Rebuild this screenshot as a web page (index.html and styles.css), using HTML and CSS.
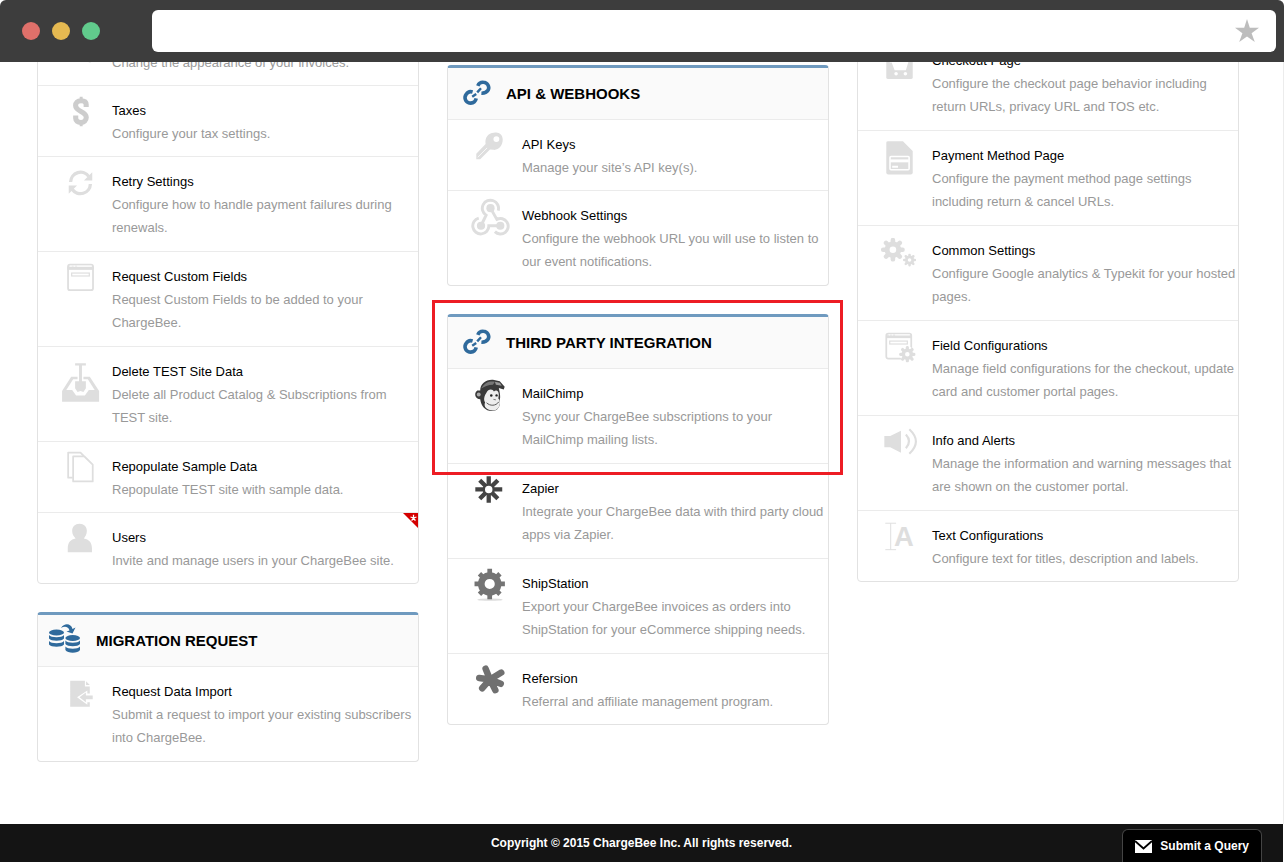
FILE: index.html
```html
<!DOCTYPE html>
<html lang="en">
<head>
<meta charset="utf-8">
<title>ChargeBee Settings</title>
<link rel="stylesheet" href="styles.css">
</head>
<body>
<svg class="defs" aria-hidden="true">
  <symbol id="gear" viewBox="-12 -12 24 24">
    <circle r="5.800" fill="none" stroke="currentColor" stroke-width="5"/>
    <g stroke="currentColor" stroke-width="4.600" stroke-linecap="round">
      <path d="M0-9.700V-7M0 9.700V7M-9.700 0H-7M9.700 0H7"/>
      <path d="M0-9.700V-7M0 9.700V7M-9.700 0H-7M9.700 0H7" transform="rotate(45)"/>
    </g>
  </symbol>
  <symbol id="link" viewBox="0 0 38 37">
    <g fill="none" stroke="#2f6a9c" stroke-width="3.600">
      <path d="M19.800 10.800A5.600 5.600 0 0 1 25.400 7.300A5.400 5.400 0 0 1 30.200 15Q28 18.400 23.400 18.200"/>
      <path d="M14.600 17A5.600 5.600 0 0 0 8.200 19.400A5.400 5.400 0 0 0 11.200 28Q17 28.800 18.200 23.400"/>
      <path d="M14.200 21.800L18.200 19M19.200 17.400L23 13.200" stroke-width="2.400"/>
    </g>
  </symbol>
</svg>
<div class="browser">
  <header class="chrome">
    <div class="dots"><span class="dot red"></span><span class="dot amber"></span><span class="dot green"></span></div>
    <div class="address">
      <input type="text" aria-label="Address">
      <svg width="24" height="24" viewBox="0 0 24 24"><path d="M12 0L14.800 8.800H24L16.600 14.200L19.800 23L12 17.600L4.200 23L7.400 14.200L0 8.800H9.200Z" fill="#bdbdbd"/></svg>
    </div>
  </header>
  <main class="page">
    <div class="columns">
      <div class="column first">
        <section class="card">
          <a class="item short" href="#">
            <svg class="icon" viewBox="0 0 44 48"><path d="M30 21H34L33 25H31Z" fill="#dedede"/></svg>
            <div class="text"><p>Change the appearance of your invoices.</p></div>
          </a>
          <a class="item short" href="#">
            <svg class="icon" viewBox="0 0 44 48"><g fill="none" stroke="#cdcdcd"><path d="M28.300 21.500V19C28.300 16 26 15 23 15C19.500 15 17.500 17 17.500 20C17.500 26.500 28.400 25.500 28.400 32C28.400 35.500 26 37.200 23 37.200C19.500 37.200 17.600 35.500 17.600 33V30" stroke-width="5.200"/><path d="M23.200 11V15M23.200 37V41" stroke-width="3"/></g></svg>
            <div class="text"><h3>Taxes</h3><p>Configure your tax settings.</p></div>
          </a>
          <a class="item" href="#">
            <svg class="icon" viewBox="0 0 44 48"><g fill="none" stroke="#dedede" stroke-width="3.400"><path d="M12.400 25.500A10.200 10.200 0 0 1 31 20"/><path d="M32.600 27.500A10.200 10.200 0 0 1 14 33"/></g><path d="M34.500 15.500V24H26ZM10.500 37.500V29H19Z" fill="#dedede"/></svg>
            <div class="text"><h3>Retry Settings</h3><p>Configure how to handle payment failures during renewals.</p></div>
          </a>
          <a class="item" href="#">
            <svg class="icon" viewBox="0 0 44 48"><g fill="none" stroke="#dedede"><rect x="9.800" y="13" width="25.500" height="26" rx="2" stroke-width="1.800"/><path d="M9 16.500H36" stroke-width="3.500"/><rect x="13.500" y="21.500" width="18" height="3" stroke-width="1.200"/></g><path d="M12 14.500H13.500M15.500 14.500H17M19 14.500H34" stroke="#fff" stroke-width="1"/></svg>
            <div class="text"><h3>Request Custom Fields</h3><p>Request Custom Fields to be added to your ChargeBee.</p></div>
          </a>
          <a class="item" href="#">
            <svg class="icon" viewBox="0 0 44 48"><g fill="#dedede"><path d="M17 16.500H28V19H24V35H28V42L25.500 46L22.500 45L19.500 46L17 42V35H21V19H17Z"/><path d="M3.700 45L13 30.500H19.500V33H15L8 44H14L18 49.500H27L31 44H37L30 33H25.500V30.500H32L41.500 45V56H3.700Z"/></g></svg>
            <div class="text"><h3>Delete TEST Site Data</h3><p>Delete all Product Catalog &amp; Subscriptions from TEST site.</p></div>
          </a>
          <a class="item short" href="#">
            <svg class="icon" viewBox="0 0 44 48"><g fill="none" stroke="#dedede" stroke-width="1.800" stroke-linejoin="round"><path d="M14.500 36.500H9.900V10.800H22.500L26 14.500"/><path d="M15 14.800H26.500L35 23V40.300H15Z"/></g></svg>
            <div class="text"><h3>Repopulate Sample Data</h3><p>Repopulate TEST site with sample data.</p></div>
          </a>
          <a class="item short" href="#">
            <svg class="icon" viewBox="0 0 44 48"><path d="M21.500 11C26 11 29 14 29 18.500C29 22 27.500 24 26 26C31 27 34.200 30 34.200 36V40H9.500V36C9.500 30 12.500 27 17.500 26C15.500 24 14 22 14 18.500C14 14 17 11 21.500 11Z" fill="#dedede"/></svg>
            <div class="text"><h3>Users</h3><p>Invite and manage users in your ChargeBee site.</p></div>
            <svg class="flag" width="15" height="15" viewBox="0 0 15 15"><path d="M0 0H15V15Z" fill="#d40000"/><path d="M10.500 5V1.800M10.500 5L13.500 4M10.500 5L12.400 7.600M10.500 5L8.600 7.600M10.500 5L7.500 4" stroke="#fff" stroke-width="1.300"/></svg>
          </a>
        </section>
        <section class="card titled">
          <h2><svg width="38" height="37" viewBox="0 0 38 37"><g fill="#2f6a9c">
            <ellipse cx="8.500" cy="10.500" rx="7.500" ry="3"/><path d="M1 13C3 16 14 16 16 13V16.500C14 19.500 3 19.500 1 16.500ZM1 19C3 22 14 22 16 19V22.500C14 25.500 3 25.500 1 22.500Z"/>
            <ellipse cx="24.700" cy="16" rx="7.300" ry="3"/><path d="M17.400 18.500C19.500 21.500 30 21.500 32 18.500V22C30 25 19.500 25 17.400 22ZM17.400 24.500C19.500 27.500 30 27.500 32 24.500V28C30 31.500 19.500 31.500 17.400 28Z"/>
            <path d="M13 6C16 1 23 1 24.500 7L27.500 5.500L24.500 11.500L18.500 9.500L21.500 8.500C20.500 4 16 4 13 6Z"/></g></svg>MIGRATION REQUEST</h2>
          <a class="item" href="#">
            <svg class="icon" viewBox="0 0 44 48"><path d="M12 14H27V20H32V27H29.500V24L19 31L29.500 38.500V36H32V40.500H12ZM28.200 14.500L32 18.500H28.200ZM21.500 31L28 26V29H35V33H28V36Z" fill="#dedede"/></svg>
            <div class="text"><h3>Request Data Import</h3><p>Submit a request to import your existing subscribers into ChargeBee.</p></div>
          </a>
        </section>
      </div>
      <div class="column middle">
        <section class="card titled">
          <h2><svg width="38" height="37"><use href="#link"/></svg>API &amp; WEBHOOKS</h2>
          <a class="item short" href="#">
            <svg class="icon" viewBox="0 0 44 48"><path d="M26 13C31 11.500 35 15 35 20C35 26 31 31 25.500 30.500L22 30L12 40H8V34.500L17.500 24.500C16.500 18 20 13.500 26 13Z" fill="#dedede"/><circle cx="28.500" cy="19.500" r="3" fill="#fff"/><path d="M9.500 38L19 28.500" stroke="#fff" stroke-width=".8"/></svg>
            <div class="text"><h3>API Keys</h3><p>Manage your site’s API key(s).</p></div>
          </a>
          <a class="item" href="#">
            <svg class="icon" viewBox="0 0 44 48"><g fill="#dedede"><circle cx="22.500" cy="17.500" r="4.200"/><circle cx="12.800" cy="35.500" r="4.200"/><circle cx="32.500" cy="35.500" r="4.200"/></g><g fill="none" stroke="#dedede" stroke-width="3"><path d="M30.400 20A8.300 8.300 0 1 0 18 24.700L12.800 35.500M22.500 17.500L29 29A7.900 7.900 0 1 1 27 41.500M32.500 35.500H20.800A8.200 8.200 0 1 1 10.500 27.700"/></g></svg>
            <div class="text"><h3>Webhook Settings</h3><p>Configure the webhook URL you will use to listen to our event notifications.</p></div>
          </a>
        </section>
        <section class="card titled">
          <h2><svg width="38" height="37"><use href="#link"/></svg>THIRD PARTY INTEGRATION</h2>
          <a class="item" href="#">
            <svg class="icon" viewBox="0 0 44 48">
              <path d="M12 22C12 15 18 10.500 25 11L32 12.500L37 18L36 21L31 19.500C32 24 33 28 32 32C33 38 30 43 24 43C17 43 13 38 12 31C7 31 5 25 9 22Z" fill="#3a3a3a"/>
              <path d="M13 20C17 13 22 12 27 13L25 16C20 16 16 18 13 20Z" fill="#777"/>
              <path d="M27 13L32 14L34 17L28 16Z" fill="#999"/>
              <circle cx="10.500" cy="26" r="2" fill="#aaa"/>
              <path d="M18.500 24C20 20 25 20 26 23C28 21 31 22 31 26L30.500 30C34 33 32 42 25 42.500C19 42 15 39 17 34C15 31 16.500 27 18.500 24Z" fill="#eee"/>
              <path d="M18.500 34.500C22 38 28 38 31 33.500" fill="none" stroke="#555"/>
              <circle cx="23.300" cy="27" r="1.300" fill="#222"/><circle cx="28.700" cy="27" r="1.200" fill="#222"/>
              <path d="M25.500 31L28 31.500" stroke="#777"/>
            </svg>
            <div class="text"><h3>MailChimp</h3><p>Sync your ChargeBee subscriptions to your MailChimp mailing lists.</p></div>
          </a>
          <a class="item" href="#">
            <svg class="icon" viewBox="0 0 44 48"><g stroke="#444" stroke-width="4.400"><path d="M20.700 12.500V21M20.700 31V39.500M7 26H16M25.500 26H34.500"/><path d="M11.500 16.500L17.500 22.500M24 29.500L30 35.500M30 16.500L24 22.500M17.500 29.500L11.500 35.500" stroke-width="4.400"/></g><circle cx="20.700" cy="26" r="5" fill="none" stroke="#444" stroke-width="2.400"/></svg>
            <div class="text"><h3>Zapier</h3><p>Integrate your ChargeBee data with third party cloud apps via Zapier.</p></div>
          </a>
          <a class="item" href="#">
            <svg class="icon" viewBox="0 0 44 48"><ellipse cx="22" cy="41.500" rx="13" ry="1.200" fill="#ddd"/><circle cx="21.700" cy="25.500" r="8.600" fill="none" stroke="#747474" stroke-width="6.800"/><g stroke="#747474" stroke-width="4.800" transform="translate(21.700 25.500)"><path d="M0-15.500V-10M0 15.500V10M-15.500 0H-10M15.500 0H10"/><path d="M0-14.800V-10M0 14.800V10M-14.800 0H-10M14.800 0H10" transform="rotate(45)"/></g></svg>
            <div class="text"><h3>ShipStation</h3><p>Export your ChargeBee invoices as orders into ShipStation for your eCommerce shipping needs.</p></div>
          </a>
          <a class="item short" href="#">
            <svg class="icon" viewBox="0 0 44 48"><path d="M22 26L17.500 15M22 26L33.500 19M22 26L33 30.500M22 26L27.500 37M22 26L14 35M22 26L11 24.500" stroke="#707070" stroke-width="6.600" stroke-linecap="round"/></svg>
            <div class="text"><h3>Refersion</h3><p>Referral and affiliate management program.</p></div>
          </a>
          <div class="highlight"></div>
        </section>
      </div>
      <div class="column">
        <section class="card">
          <a class="item" href="#">
            <svg class="icon" viewBox="0 0 44 48"><path d="M8 10H26L35 19V42Q35 44 33 44H10Q8 44 8 42Z" fill="#dedede"/><path d="M11.500 25H31L28 35H16.500L13.500 27H11.500Z" fill="#fff"/><circle cx="18" cy="38.500" r="1.800" fill="#fff"/><circle cx="27.500" cy="38.500" r="1.800" fill="#fff"/></svg>
            <div class="text"><h3>Checkout Page</h3><p>Configure the checkout page behavior including return URLs, privacy URL and TOS etc.</p></div>
          </a>
          <a class="item" href="#">
            <svg class="icon" viewBox="0 0 44 48"><path d="M8 12Q8 10.500 10 10.500H25L35 20.500V42.500Q35 44.500 33 44.500H10Q8 44.500 8 42.500Z" fill="#dedede"/><rect x="11.800" y="26" width="19.500" height="13.500" rx="1" fill="none" stroke="#fff" stroke-width="1.600"/><path d="M12 30.500H31" stroke="#fff" stroke-width="3"/><path d="M14 36.500H20" stroke="#fff" stroke-width="2"/></svg>
            <div class="text"><h3>Payment Method Page</h3><p>Configure the payment method page settings including return &amp; cancel URLs.</p></div>
          </a>
          <a class="item" href="#">
            <svg class="icon gray" viewBox="0 0 44 48"><use href="#gear" x="2.500" y="12" width="24.500" height="24.500"/><use href="#gear" x="25" y="28" width="13.500" height="13.500"/></svg>
            <div class="text"><h3>Common Settings</h3><p>Configure Google analytics &amp; Typekit for your hosted pages.</p></div>
          </a>
          <a class="item" href="#">
            <svg class="icon gray" viewBox="0 0 44 48"><g fill="none" stroke="#dedede"><rect x="8" y="13" width="25.500" height="25.500" rx="2" stroke-width="1.800"/><path d="M8 16H34" stroke-width="3"/><rect x="11.500" y="20.500" width="18" height="3" stroke-width="1.200"/></g><path d="M10.500 14.200H12M13.500 14.200H15M17 14.200H32" stroke="#fff" stroke-width="1"/><circle cx="29.500" cy="34" r="8" fill="#fff"/><use href="#gear" x="21" y="25.500" width="17" height="17"/></svg>
            <div class="text"><h3>Field Configurations</h3><p>Manage field configurations for the checkout, update card and customer portal pages.</p></div>
          </a>
          <a class="item" href="#">
            <svg class="icon" viewBox="0 0 44 48"><path d="M6 20.500H12L23 15V37.500L12 32H6Z" fill="#dedede"/><path d="M28 19Q34.500 26 28 33M31.500 13.500Q45 26 31.500 38.500" fill="none" stroke="#dedede" stroke-width="2.200"/></svg>
            <div class="text"><h3>Info and Alerts</h3><p>Manage the information and warning messages that are shown on the customer portal.</p></div>
          </a>
          <a class="item short" href="#">
            <svg class="icon" viewBox="0 0 44 48"><path d="M7 12.500H18M12.500 12.500V39.500M7 39.500H18" fill="none" stroke="#dedede"/><text x="16" y="36" class="letter">A</text></svg>
            <div class="text"><h3>Text Configurations</h3><p>Configure text for titles, description and labels.</p></div>
          </a>
        </section>
      </div>
    </div>
  </main>
  <footer class="footer">
    <p>Copyright © 2015 ChargeBee Inc. All rights reserved.</p>
    <button type="button" class="query"><svg width="17" height="13" viewBox="0 0 17 13"><path d="M0 0H17V13H0Z" fill="#fff"/><path d="M0 1L8.500 8.500L17 1" fill="none" stroke="#000" stroke-width="1.800"/></svg>Submit a Query</button>
  </footer>
</div>
</body>
</html>
```
FILE: styles.css
```css
* {
  box-sizing: border-box;
}

body {
  margin: 0;
  background: #fff;
  color: #000;
  font: 12px/23px "Liberation Sans", Arial, sans-serif;
}

h2,
h3,
p {
  margin: 0;
}

.defs {
  display: block;
  width: 0;
  height: 0;
}

.browser {
  display: flex;
  flex-direction: column;
  min-height: 100vh;
  padding-bottom: 2px;
}

.chrome {
  position: relative;
  z-index: 2;
  display: flex;
  align-items: center;
  height: 62px;
  padding: 0 8px 0 22px;
  background: #3d3d3d;
  border-radius: 6px 6px 0 0;
}

.dots {
  display: flex;
  gap: 12px;
  width: 130px;
}

.dot {
  width: 18px;
  height: 18px;
  border-radius: 50%;
}

.red {
  background: #df706a;
}

.amber {
  background: #e5b951;
}

.green {
  background: #61cb8c;
}

.address {
  display: flex;
  flex: 1;
  align-items: center;
  height: 42px;
  padding: 0 17px;
  background: #fff;
  border-radius: 6px;
}

.address input {
  flex: 1;
  border: 0;
  outline: 0;
  background: transparent;
}

.page {
  flex: 1;
  overflow: hidden;
  padding: 0 44px 62px 37px;
  border-right: 1px solid #ececec;
}

/* The settings list is scrolled part of the way down. */
.columns {
  display: grid;
  grid-template-columns: repeat(3, minmax(0, 1fr));
  gap: 28px;
  margin-top: -27px;
}

.column {
  display: flex;
  flex-direction: column;
  gap: 28px;
}

.first {
  padding-top: 2px;
}

.middle {
  padding-top: 30px;
}

.card {
  position: relative;
  border: 1px solid #e2e2e2;
  border-radius: 4px;
}

.titled {
  border-top: 3px solid #6f9abf;
}

.card h2 {
  display: flex;
  align-items: center;
  gap: 10px;
  height: 52px;
  padding-left: 10px;
  background: #fafafa;
  border-bottom: 1px solid #ebebeb;
  font-size: 15px;
  font-weight: bold;
}

.item {
  position: relative;
  display: flex;
  gap: 10px;
  padding-left: 20px;
  border-bottom: 1px solid #ebebeb;
  color: inherit;
  text-decoration: none;
}

.item:last-of-type {
  border-bottom: 0;
}

.icon {
  flex: none;
  width: 44px;
  height: 47px;
  overflow: visible;
}

.gray {
  color: #dedede;
}

.letter {
  fill: #dedede;
  font-size: 28px;
  font-weight: bold;
}

.text {
  flex: 1;
  min-width: 0;
  padding: 13px 0 12px;
}

.short .text {
  padding-bottom: 11px;
}

.text h3 {
  font-size: 13px;
  font-weight: normal;
}

.text p {
  color: #999;
  font-size: 13px;
}

.flag {
  position: absolute;
  top: 0;
  right: 0;
}

/* Callout around the heading and first row of its card. */
.highlight {
  position: absolute;
  top: -17px;
  right: -15px;
  left: -16px;
  height: 175px;
  border: 3px solid #ed1c24;
  pointer-events: none;
}

.footer {
  position: relative;
  height: 38px;
  margin-right: 1px;
  padding: 8px 0;
  background: #141414;
  color: #fff;
  font-weight: bold;
  text-align: center;
}

.query {
  position: absolute;
  right: 21px;
  bottom: 0;
  display: flex;
  align-items: center;
  gap: 8px;
  height: 33px;
  padding: 0 12px;
  border: 1px solid #444;
  border-bottom: 0;
  border-radius: 6px 6px 0 0;
  background: #000;
  color: #fff;
  font: bold 12px "Liberation Sans", Arial, sans-serif;
}
```
